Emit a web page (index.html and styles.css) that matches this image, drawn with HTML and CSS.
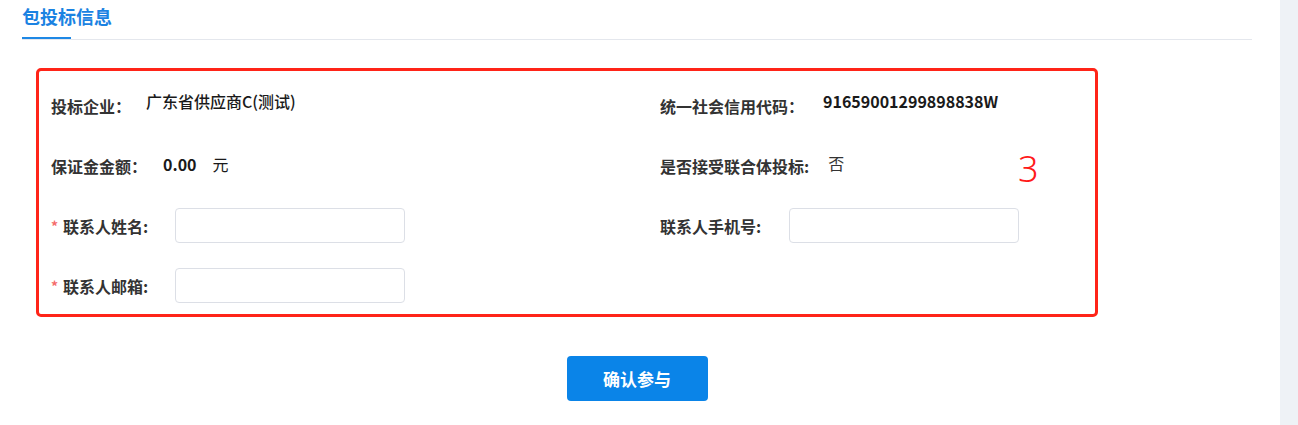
FILE: index.html
```html
<!DOCTYPE html>
<html lang="zh-CN">
<head>
<meta charset="utf-8">
<title>包投标信息</title>
<link rel="stylesheet" href="styles.css">
</head>
<body>
<div class="page">
  <main class="main">
    <div class="tabs">
      <div class="tab">包投标信息</div>
    </div>
    <section class="box">
      <div class="grid">
        <div class="item">
          <span class="label">投标企业：</span>
          <span class="value up4 gap-a">广东省供应商C(测试)</span>
        </div>
        <div class="item">
          <span class="label">统一社会信用代码：</span>
          <span class="value num up5 gap-c">91659001299898838W</span>
        </div>
        <div class="item">
          <span class="label">保证金金额：</span>
          <span class="value num up2 gap-b">0.00</span>
          <span class="unit up2">元</span>
        </div>
        <div class="item">
          <span class="label">是否接受联合体投标:</span>
          <span class="value plain up3 gap-c">否</span>
        </div>
        <div class="item">
          <span class="star">*</span>
          <span class="label">联系人姓名:</span>
          <input class="input" type="text">
        </div>
        <div class="item">
          <span class="label">联系人手机号:</span>
          <input class="input input-r" type="text">
        </div>
        <div class="item">
          <span class="star">*</span>
          <span class="label">联系人邮箱:</span>
          <input class="input" type="text">
        </div>
        <div class="item"></div>
      </div>
      <span class="mark">3</span>
    </section>
    <div class="actions">
      <button class="btn" type="button">确认参与</button>
    </div>
  </main>
  <aside class="side"></aside>
</div>
</body>
</html>
```
FILE: styles.css
```css
* { box-sizing: border-box; }
html, body { margin: 0; padding: 0; background: #fff; }
body {
  font-family: "Noto Sans CJK SC", "Noto Sans", sans-serif;
  color: #333;
}
.page {
  display: flex;
  min-height: 425px;
}
.main {
  flex: 1;
  padding: 0 28px 0 22px;
}
.side {
  width: 18px;
  background: #eef2f6;
}
.tabs {
  padding-top: 3px;
  border-bottom: 1px solid #e4e7ed;
}
.tab {
  font-size: 18px;
  line-height: 26px;
  font-weight: 700;
  color: #1a82e2;
}
.tab::after {
  content: "";
  display: block;
  width: 49px;
  height: 2px;
  margin-top: 8px;
  background: #1e88e5;
}
.box {
  position: relative;
  width: 1062px;
  margin: 28px 0 0 14px;
  border: 3px solid #ff2418;
  border-radius: 5px;
}
.grid {
  display: grid;
  grid-template-columns: 609px 1fr;
  grid-auto-rows: 35px;
  row-gap: 25px;
  padding: 17px 12px 11px 12px;
}
.item {
  display: flex;
  align-items: center;
  font-size: 16px;
}
.label {
  font-weight: 700;
  color: #333;
  line-height: 22px;
}
.value {
  color: #1a1a1a;
  font-weight: 500;
  line-height: 22px;
}
.value.num { font-weight: 700; }
.value.plain { font-weight: 400; color: #333; }
.gap-a { margin-left: 15px; }
.gap-b { margin-left: 16px; }
.gap-c { margin-left: 19px; }
.up2 { margin-bottom: 3px; }
.up3 { margin-bottom: 6px; }
.up4 { margin-bottom: 9px; }
.up5 { margin-bottom: 10px; }
.unit {
  margin-left: 16px;
  color: #1a1a1a;
  line-height: 22px;
}
.star {
  color: #f56c6c;
  font-size: 14px;
  margin-right: 5px;
  font-weight: 700;
}
.input {
  width: 230px;
  height: 35px;
  margin-left: 27px;
  border: 1px solid #dcdfe6;
  border-radius: 4px;
  background: #fff;
  font: inherit;
  padding: 0 10px;
}
.input-r { margin-left: 28px; }
.mark {
  position: absolute;
  left: 979px;
  top: 80px;
  font-family: "Noto Sans", "Liberation Sans", sans-serif;
  font-weight: 300;
  font-size: 36px;
  line-height: 1;
  color: #ff1a1a;
}
.actions {
  display: flex;
  justify-content: center;
  margin-top: 39px;
}
.btn {
  width: 141px;
  height: 45px;
  border: none;
  border-radius: 4px;
  background: #0a84e8;
  color: #fff;
  font-family: inherit;
  font-size: 17px;
  font-weight: 700;
}
```
